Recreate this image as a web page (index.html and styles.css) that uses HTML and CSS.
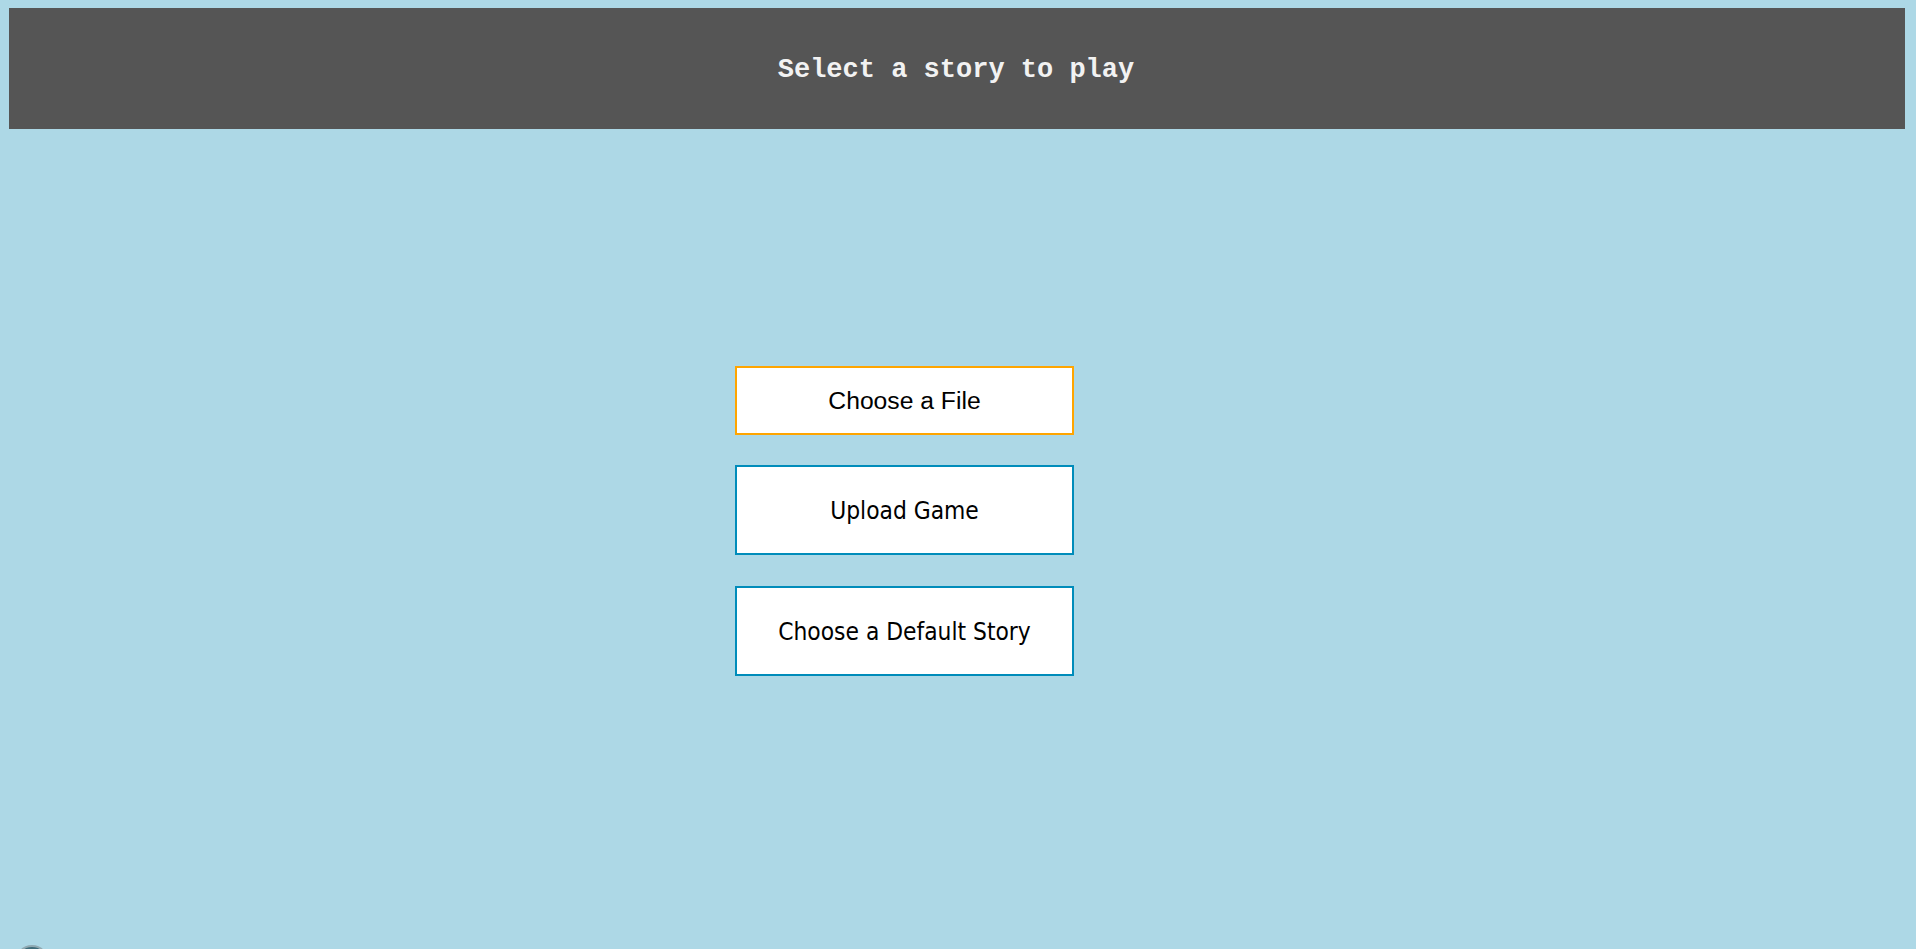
FILE: index.html
```html
<!DOCTYPE html>
<html lang="en">
<head>
<meta charset="utf-8">
<title>Select a story to play</title>
<link rel="stylesheet" href="styles.css">
</head>
<body>
<header class="topbar">
  <h1 class="title">Select a story to play</h1>
</header>
<main class="chooser">
  <label class="btn btn-file">Choose a File</label>
  <button class="btn btn-action btn-upload" type="button">Upload Game</button>
  <button class="btn btn-action btn-default" type="button">Choose a Default Story</button>
</main>
<div class="corner-orb"></div>
</body>
</html>
```
FILE: styles.css
```css
html, body {
  height: 100%;
}
body {
  margin: 0;
  padding: 8px 11px 0 9px;
  background: #add8e6;
  overflow: hidden;
  box-sizing: border-box;
}
.topbar {
  height: 121px;
  background: #555555;
  display: flex;
  align-items: center;
  justify-content: center;
}
.title {
  margin: 2px 2px 0 0;
  font-family: "Liberation Mono", "Courier New", monospace;
  font-weight: bold;
  font-size: 27px;
  color: #f2f2f2;
  letter-spacing: 0;
}
.chooser {
  display: flex;
  flex-direction: column;
  align-items: flex-start;
  margin-top: 237px;
  padding-left: 726px;
}
.btn {
  box-sizing: border-box;
  width: 339px;
  background: #ffffff;
  color: #000;
  display: flex;
  align-items: center;
  justify-content: center;
  padding: 0;
  margin: 0;
  cursor: pointer;
}
.btn-file {
  height: 69px;
  border: 2px solid #ffa500;
  font-family: "Liberation Sans", Arial, sans-serif;
  font-size: 24.7px;
}
.btn-action {
  height: 90px;
  border: 2px solid #008cba;
  font-family: "DejaVu Sans", sans-serif;
  font-stretch: condensed;
  font-size: 24.3px;
}
.btn-upload {
  margin-top: 30px;
}
.btn-default {
  margin-top: 31px;
}
.corner-orb {
  position: fixed;
  left: 15px;
  top: 945px;
  width: 34px;
  height: 34px;
  border-radius: 50%;
  background: #3d6c7a;
  border: 2px solid #8fa9b2;
  box-sizing: border-box;
}
```
